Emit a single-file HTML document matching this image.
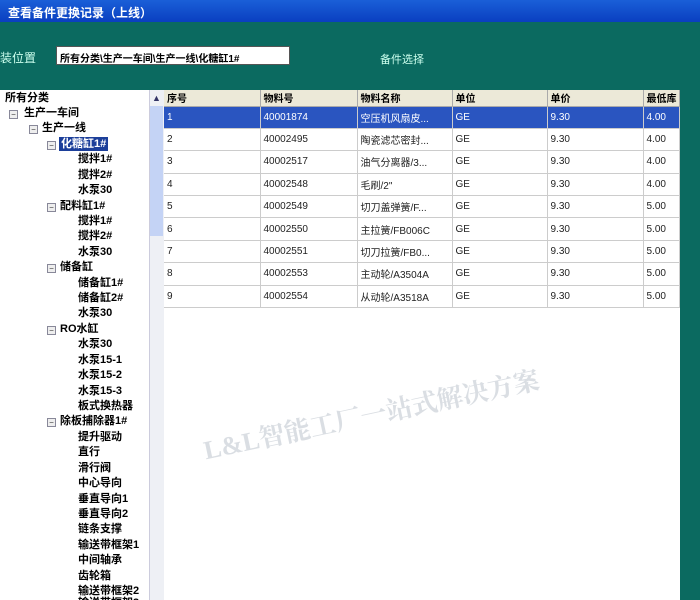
<!DOCTYPE html>
<html><head><meta charset="utf-8"><style>
*{margin:0;padding:0;box-sizing:border-box}
html{width:700px;height:600px;overflow:hidden}
body{width:700px;height:600px;overflow:hidden;background:#0b6a60;font-family:"Liberation Sans","Noto Sans CJK SC",sans-serif;position:relative;font-size:11px}
#title{position:absolute;left:0;top:0;width:700px;height:22px;background:linear-gradient(#1a5fd8,#0a3fc0);color:#fff;font-weight:bold;font-size:12px;padding:4px 8px;}
#lbl{position:absolute;left:-12px;top:49px;color:#cfe;font-size:12px}
#inp{position:absolute;left:56px;top:46px;width:234px;height:19px;background:#fff;border:1px solid #555;font-size:10px;padding:3px 3px;color:#000;font-weight:bold}
#sel{position:absolute;left:380px;top:51px;color:#cfe;font-size:11px}
#tree{position:absolute;left:0;top:90px;width:149px;height:510px;background:#fff}
#sb{position:absolute;left:149px;top:90px;width:15px;height:510px;background:#eef0f5;border-left:1px solid #ccd}
#thumb{position:absolute;left:150px;top:106px;width:13px;height:130px;background:#c4d3f5}
.t{position:absolute;font-size:11px;color:#000;white-space:nowrap;line-height:14px;font-weight:bold}
.b{position:absolute;width:9px;height:9px;border:1px solid #889;background:#eee;font-size:8px;line-height:7px;text-align:center;color:#333}
#grid{position:absolute;left:164px;top:90px;width:516px;height:510px;background:#fff}
table{border-collapse:collapse;position:absolute;left:164px;top:90px;width:516px;font-size:10px}
th{height:16px;background:#ece9d8;border-right:1px solid #aaa;border-bottom:1px solid #aaa;text-align:left;font-weight:bold;padding-left:3px}
td{height:22.4px;border-right:1px solid #ccc;border-bottom:1px solid #ccc;padding-left:3px;color:#222;vertical-align:middle}
tr.s td{background:#2a55c0;color:#fff}
#wm{position:absolute;left:200px;top:395px;font-size:26px;color:rgba(150,160,175,.35);font-weight:bold;font-family:"Liberation Serif","Noto Serif CJK SC",serif;transform:rotate(-12deg);white-space:nowrap}
</style></head><body>
<div id="title">查看备件更换记录（上线）</div>
<div id="lbl">安装位置</div>
<div id="inp">所有分类\生产一车间\生产一线\化糖缸1#</div>
<div id="sel">备件选择</div>
<div id="tree"></div><div id="sb"></div><div id="thumb"></div>
<div style="position:absolute;left:152px;top:93px;font-size:9px;color:#336">▲</div>
<div id="grid"></div>
<table>
<tr><th style="width:96px">序号</th><th style="width:97px">物料号</th><th style="width:95px">物料名称</th><th style="width:95px">单位</th><th style="width:96px">单价</th><th>最低库</th></tr>
<tr class="s"><td>1</td><td>40001874</td><td>空压机风扇皮...</td><td>GE</td><td>9.30</td><td>4.00</td></tr>
<tr><td>2</td><td>40002495</td><td>陶瓷滤芯密封...</td><td>GE</td><td>9.30</td><td>4.00</td></tr>
<tr><td>3</td><td>40002517</td><td>油气分离器/3...</td><td>GE</td><td>9.30</td><td>4.00</td></tr>
<tr><td>4</td><td>40002548</td><td>毛刷/2"</td><td>GE</td><td>9.30</td><td>4.00</td></tr>
<tr><td>5</td><td>40002549</td><td>切刀盖弹簧/F...</td><td>GE</td><td>9.30</td><td>5.00</td></tr>
<tr><td>6</td><td>40002550</td><td>主拉簧/FB006C</td><td>GE</td><td>9.30</td><td>5.00</td></tr>
<tr><td>7</td><td>40002551</td><td>切刀拉簧/FB0...</td><td>GE</td><td>9.30</td><td>5.00</td></tr>
<tr><td>8</td><td>40002553</td><td>主动轮/A3504A</td><td>GE</td><td>9.30</td><td>5.00</td></tr>
<tr><td>9</td><td>40002554</td><td>从动轮/A3518A</td><td>GE</td><td>9.30</td><td>5.00</td></tr>
</table>
<div id="wm">L&amp;L智能工厂一站式解决方案</div>
<div class="t" style="left:5px;top:91px">所有分类</div>
<div class="b" style="left:9px;top:110px">−</div><div class="t" style="left:24px;top:106px">生产一车间</div>
<div class="b" style="left:29px;top:125px">−</div><div class="t" style="left:42px;top:121px">生产一线</div>
<div class="b" style="left:47px;top:141px">−</div><div class="t" style="left:59px;top:137px;background:#1c3f9a;color:#fff;padding:0 2px">化糖缸1#</div>
<div class="t" style="left:78px;top:152px">搅拌1#</div>
<div class="t" style="left:78px;top:168px">搅拌2#</div>
<div class="t" style="left:78px;top:183px">水泵30</div>
<div class="b" style="left:47px;top:203px">−</div><div class="t" style="left:60px;top:199px">配料缸1#</div>
<div class="t" style="left:78px;top:214px">搅拌1#</div>
<div class="t" style="left:78px;top:229px">搅拌2#</div>
<div class="t" style="left:78px;top:245px">水泵30</div>
<div class="b" style="left:47px;top:264px">−</div><div class="t" style="left:60px;top:260px">储备缸</div>
<div class="t" style="left:78px;top:276px">储备缸1#</div>
<div class="t" style="left:78px;top:291px">储备缸2#</div>
<div class="t" style="left:78px;top:306px">水泵30</div>
<div class="b" style="left:47px;top:326px">−</div><div class="t" style="left:60px;top:322px">RO水缸</div>
<div class="t" style="left:78px;top:337px">水泵30</div>
<div class="t" style="left:78px;top:353px">水泵15-1</div>
<div class="t" style="left:78px;top:368px">水泵15-2</div>
<div class="t" style="left:78px;top:384px">水泵15-3</div>
<div class="t" style="left:78px;top:399px">板式换热器</div>
<div class="b" style="left:47px;top:418px">−</div><div class="t" style="left:60px;top:414px">除板捕除器1#</div>
<div class="t" style="left:78px;top:430px">提升驱动</div>
<div class="t" style="left:78px;top:445px">直行</div>
<div class="t" style="left:78px;top:461px">滑行阀</div>
<div class="t" style="left:78px;top:476px">中心导向</div>
<div class="t" style="left:78px;top:492px">垂直导向1</div>
<div class="t" style="left:78px;top:507px">垂直导向2</div>
<div class="t" style="left:78px;top:522px">链条支撑</div>
<div class="t" style="left:78px;top:538px">输送带框架1</div>
<div class="t" style="left:78px;top:553px">中间轴承</div>
<div class="t" style="left:78px;top:569px">齿轮箱</div>
<div class="t" style="left:78px;top:584px">输送带框架2</div>
<div class="t" style="left:78px;top:596px;height:4px;overflow:hidden">输送带框架3</div>
</body></html>
